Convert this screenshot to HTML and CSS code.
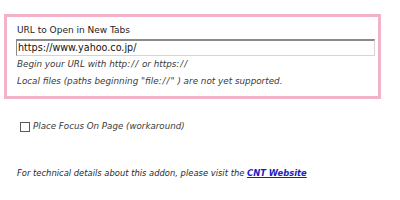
FILE: index.html
```html
<!DOCTYPE html>
<html>
<head>
<meta charset="utf-8">
<link rel="stylesheet" href="styles.css">
</head>
<body>
<div class="page">
  <div class="box">
    <div class="label">URL to Open in New Tabs</div>
    <div class="input">https://www.yahoo.co.jp/</div>
    <div class="note">Begin your URL with http<span class="sep">://</span> or https<span class="sep">://</span></div>
    <div class="note">Local files (paths beginning "file<span class="sep">://</span>" ) are not yet supported.</div>
  </div>
  <div class="check-row">
    <span class="check"></span>
    <span class="check-label">Place Focus On Page (workaround)</span>
  </div>
  <div class="footer">For technical details about this addon, please visit the <a class="link" href="#">CNT Website</a></div>
</div>
</body>
</html>
```
FILE: styles.css
```css
html, body {
  margin: 0;
  padding: 0;
  background: #ffffff;
}
.page {
  width: 400px;
  height: 200px;
  padding: 14px 0 0 4px;
  box-sizing: border-box;
  font-family: "DejaVu Sans", "Verdana", sans-serif;
  color: #222;
}
.box {
  width: 377px;
  height: 85px;
  box-sizing: border-box;
  border: 3px solid #f2b3c9;
  padding: 8px 4px 0 9px;
  display: flex;
  flex-direction: column;
}
.label {
  font-size: 9px;
  line-height: 11px;
  padding-left: 1px;
  color: #1e1e1e;
}
.input {
  margin-top: 3px;
  width: 359px;
  height: 17px;
  flex: none;
  box-sizing: border-box;
  border: 1px solid #d4d4d4;
  border-top: 2px solid #8a8a8a;
  border-left-color: #8a8a8a;
  font-size: 9.6px;
  line-height: 14px;
  padding-left: 1px;
  color: #111;
}
.note {
  font-style: italic;
  font-size: 8.8px;
  line-height: 17px;
  padding-left: 1px;
  color: #3a3a3a;
}
.sep {
  letter-spacing: 1px;
}
.check-row {
  display: flex;
  align-items: center;
  gap: 3px;
  height: 11px;
  margin: 22px 0 0 16px;
}
.check {
  width: 10px;
  height: 10px;
  flex: none;
  border: 1px solid #5a5a5a;
  box-sizing: border-box;
  background: #fff;
}
.check-label {
  font-style: italic;
  font-size: 8.7px;
  line-height: 11px;
  color: #3a3a3a;
}
.footer {
  margin: 35px 0 0 13px;
  font-style: italic;
  font-size: 8.4px;
  line-height: 12px;
  color: #2a2a2a;
}
.link {
  color: #1c1cc8;
  font-weight: bold;
  text-decoration: underline;
}
```
